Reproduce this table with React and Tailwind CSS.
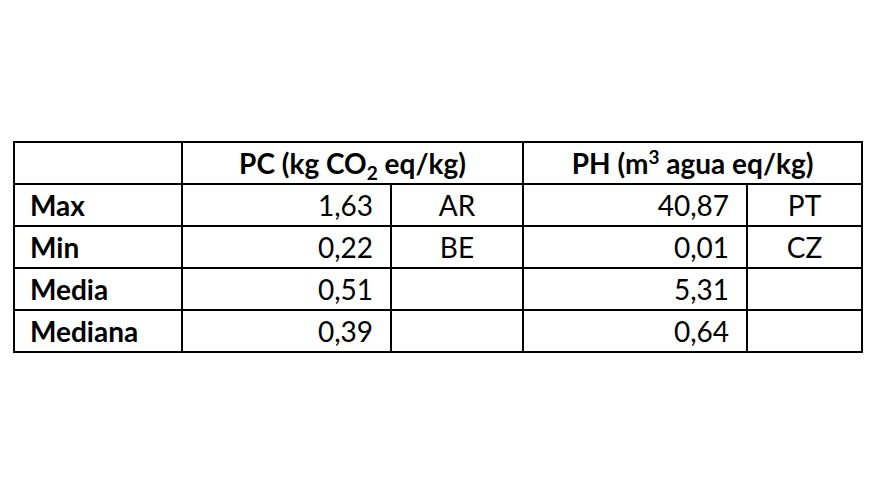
import React from 'react';

const rows = [
  { label: 'Max', pc: '1,63', pcCountry: 'AR', ph: '40,87', phCountry: 'PT' },
  { label: 'Min', pc: '0,22', pcCountry: 'BE', ph: '0,01', phCountry: 'CZ' },
  { label: 'Media', pc: '0,51', pcCountry: '', ph: '5,31', phCountry: '' },
  { label: 'Mediana', pc: '0,39', pcCountry: '', ph: '0,64', phCountry: '' },
];

const cell = 'border-2 border-black h-[42px] p-0 leading-none';

const App = () => {
  return (
    <div
      className="w-[875px] h-[500px] bg-white pl-[13px] pt-[141px] text-black text-[28px]"
      style={{ fontFamily: 'Lato, "Open Sans", sans-serif' }}
    >
      <table className="border-collapse table-fixed w-[848px]">
        <colgroup>
          <col className="w-[168px]" />
          <col className="w-[209px]" />
          <col className="w-[132px]" />
          <col className="w-[224px]" />
          <col className="w-[115px]" />
        </colgroup>
        <thead>
          <tr>
            <th className={cell}></th>
            <th colSpan={2} className={`${cell} font-bold text-center`}>
              PC (kg CO<span className="relative top-[6px] text-[19px]">2</span> eq/kg)
            </th>
            <th colSpan={2} className={`${cell} font-bold text-center`}>
              PH (m<span className="relative -top-[10px] text-[19px]">3</span> agua eq/kg)
            </th>
          </tr>
        </thead>
        <tbody>
          {rows.map((row) => (
            <tr key={row.label}>
              <td className={`${cell} font-bold text-left pl-[15px]`}>{row.label}</td>
              <td className={`${cell} text-right pr-[17px]`}>{row.pc}</td>
              <td className={`${cell} text-center`}>{row.pcCountry}</td>
              <td className={`${cell} text-right pr-[17px]`}>{row.ph}</td>
              <td className={`${cell} text-center`}>{row.phCountry}</td>
            </tr>
          ))}
        </tbody>
      </table>
    </div>
  );
};

export default App;
